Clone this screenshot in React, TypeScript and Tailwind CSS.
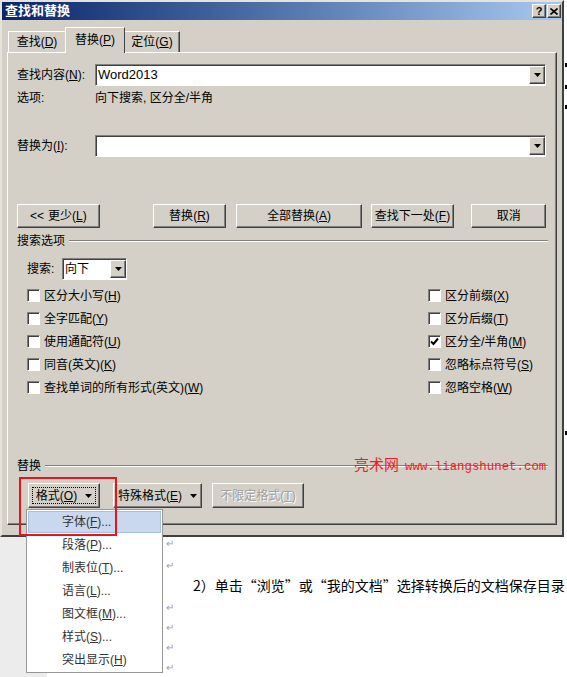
import React from "react";

const raised =
  "border border-t-white border-l-white border-r-[#404040] border-b-[#404040] shadow-[inset_-1px_-1px_0_#808080] bg-[#d4d0c8]";
const sunken =
  "border border-t-[#808080] border-l-[#808080] border-r-white border-b-white shadow-[inset_1px_1px_0_#404040] bg-white";

const Acc = ({ text, k, tail = "" }: { text: string; k: string; tail?: string }) => (
  <span className="whitespace-nowrap">
    {text}(<span className="underline underline-offset-[1px]">{k}</span>){tail}
  </span>
);

const Arrow = () => (
  <svg width="7" height="4" viewBox="0 0 7 4">
    <path d="M0 0h7L3.5 4z" fill="#000" />
  </svg>
);

const Combo = ({ value = "", className = "" }: { value?: string; className?: string }) => (
  <div className={`${sunken} flex items-center h-[22px] ${className}`}>
    <span className="flex-1 pl-[2px] text-[13px]">{value}</span>
    <div className={`${raised} w-[16px] h-[18px] flex items-center justify-center`}>
      <Arrow />
    </div>
  </div>
);

const Check = ({ label, checked = false }: { label: React.ReactNode; checked?: boolean }) => (
  <div className="flex items-center h-[23px]">
    <div className={`${sunken} w-[13px] h-[13px] flex items-center justify-center`}>
      {checked && (
        <svg width="9" height="9" viewBox="0 0 9 9">
          <path d="M1 4.5 L3.5 7 L8 1.5" stroke="#000" strokeWidth="2" fill="none" />
        </svg>
      )}
    </div>
    <span className="ml-[4px]">{label}</span>
  </div>
);

const Btn = ({ className = "", children }: { className?: string; children: React.ReactNode }) => (
  <div className={`${raised} flex items-center justify-center ${className}`}>{children}</div>
);

const GroupLine = ({ title }: { title: string }) => (
  <div className="flex items-center h-[16px]">
    <span>{title}</span>
    <div className="flex-1 ml-[4px] -mr-[2px] border-t border-t-[#808080] border-b border-b-white" />
  </div>
);

const menuItems: [string, string][] = [
  ["段落", "P"],
  ["制表位", "T"],
  ["语言", "L"],
  ["图文框", "M"],
  ["样式", "S"],
];

const App = () => {
  return (
    <div className="relative w-[567px] h-[677px] overflow-hidden bg-white text-[12px] leading-[16px] text-black font-['Liberation_Sans','Noto_Sans_CJK_SC',sans-serif]">
      <div className="flex">
        {/* dialog */}
        <div className="w-[564px] h-[537px] bg-[#d4d0c8] border-2 border-t-[#e6e3dc] border-l-[#e6e3dc] border-r-[#404040] border-b-[#404040] flex flex-col">
          <div className="h-[18px] flex items-center bg-linear-to-r from-[#0a246a] to-[#a9c9f0] pl-[3px] pr-[1px]">
            <span className="flex-1 text-white font-bold text-[13px]">查找和替换</span>
            <Btn className="w-[14px] h-[14px] text-[11px] font-bold">?</Btn>
            <Btn className="w-[14px] h-[14px] ml-px">
              <svg width="8" height="7" viewBox="0 0 8 7">
                <path d="M0.5 0.5 L7.5 6.5 M7.5 0.5 L0.5 6.5" stroke="#000" strokeWidth="1.6" />
              </svg>
            </Btn>
          </div>

          {/* tabs */}
          <div className="mt-[7px] h-[25px] flex items-end pl-[6px]">
            <div className="h-[21px] w-[57px] flex items-center justify-center border-t border-l border-t-white border-l-white">
              <Acc text="查找" k="D" />
            </div>
            <div className="relative z-10 -mb-px h-[26px] w-[60px] flex items-center justify-center bg-[#d4d0c8] border-t border-l border-r border-t-white border-l-white border-r-[#404040] pb-[2px]">
              <Acc text="替换" k="P" />
            </div>
            <div className="h-[21px] w-[55px] flex items-center justify-center border-t border-r border-t-white border-r-[#404040] shadow-[inset_-1px_0_0_#808080]">
              <Acc text="定位" k="G" />
            </div>
          </div>

          {/* panel */}
          <div className="ml-[5px] w-[550px] h-[473px] border border-t-white border-l-white border-r-[#404040] border-b-[#404040] shadow-[inset_-1px_-1px_0_#808080] pl-[9px] pr-[10px] flex flex-col">
            <div className="mt-[11px] flex items-center">
              <span className="w-[78px]">
                <Acc text="查找内容" k="N" tail=":" />
              </span>
              <Combo value="Word2013" className="flex-1" />
            </div>
            <div className="mt-[4px] h-[16px] flex items-center">
              <span className="w-[78px]">选项:</span>
              <span>向下搜索, 区分全/半角</span>
            </div>
            <div className="mt-[29px] flex items-center">
              <span className="w-[78px]">
                <Acc text="替换为" k="I" tail=":" />
              </span>
              <Combo className="flex-1" />
            </div>

            <div className="mt-[47px] h-[24px] flex">
              <Btn className="w-[83px]">
                <span className="mr-[4px]">{"<<"}</span>
                <Acc text="更少" k="L" />
              </Btn>
              <Btn className="w-[74px] ml-[53px]">
                <Acc text="替换" k="R" />
              </Btn>
              <Btn className="w-[126px] ml-[10px]">
                <Acc text="全部替换" k="A" />
              </Btn>
              <Btn className="w-[84px] ml-[9px]">
                <Acc text="查找下一处" k="F" />
              </Btn>
              <Btn className="w-[75px] ml-[17px]">取消</Btn>
            </div>

            <div className="mt-[5px]">
              <GroupLine title="搜索选项" />
            </div>

            <div className="mt-[9px] ml-[10px] flex items-center h-[22px]">
              <span className="w-[35px]">搜索:</span>
              <div className={`${sunken} w-[65px] h-[22px] flex items-center`}>
                <span className="flex-1 pl-[2px]">向下</span>
                <div className={`${raised} w-[16px] h-[18px] flex items-center justify-center`}>
                  <Arrow />
                </div>
              </div>
            </div>

            <div className="mt-[4px] ml-[10px] grid grid-cols-[401px_1fr]">
              <Check label={<Acc text="区分大小写" k="H" />} />
              <Check label={<Acc text="区分前缀" k="X" />} />
              <Check label={<Acc text="全字匹配" k="Y" />} />
              <Check label={<Acc text="区分后缀" k="T" />} />
              <Check label={<Acc text="使用通配符" k="U" />} />
              <Check label={<Acc text="区分全/半角" k="M" />} checked />
              <Check label={<Acc text="同音(英文)" k="K" />} />
              <Check label={<Acc text="忽略标点符号" k="S" />} />
              <Check label={<Acc text="查找单词的所有形式(英文)" k="W" />} />
              <Check label={<Acc text="忽略空格" k="W" />} />
            </div>

            <div className="relative mt-[59px]">
              <GroupLine title="替换" />
              {/* site watermark painted over the group line */}
              <span className="absolute left-[337px] top-[-2px] whitespace-nowrap text-[#ee1c24]">
                <span className="text-[15px] font-['Noto_Sans_CJK_SC',sans-serif]">亮术网</span>
                <span className="ml-[6px] text-[12.4px] font-['Liberation_Mono',monospace]">www.liangshunet.com</span>
              </span>
            </div>

            <div className="mt-[9px] h-[25px] flex">
              <Btn className="w-[72px] ml-[11px] p-[3px]">
                <div className="w-full h-full border border-dotted border-black flex items-center justify-center gap-[8px]">
                  <Acc text="格式" k="O" />
                  <Arrow />
                </div>
              </Btn>
              <Btn className="w-[89px] ml-[13px] gap-[8px]">
                <Acc text="特殊格式" k="E" />
                <Arrow />
              </Btn>
              <Btn className="w-[92px] ml-[10px] text-[#a0a0a0] [text-shadow:1px_1px_0_#fff]">
                <Acc text="不限定格式" k="T" />
              </Btn>
            </div>
          </div>
        </div>

        {/* strip of the window behind */}
        <div className="w-[3px] flex flex-col items-end">
          <div className="mt-[63px] w-[2px] h-[4px] bg-black" />
          <div className="mt-[18px] w-[2px] h-[4px] bg-black" />
          <div className="mt-[16px] w-[2px] h-[4px] bg-black" />
          <div className="mt-[322px] w-[2px] h-[4px] bg-black" />
        </div>
      </div>

      {/* document area under the dialog */}
      <div className="flex h-[140px]">
        <div className="w-[47px] bg-[#ececec]" />
        <div className="flex-1 pl-[117px] flex flex-col text-[#a0a0a0] text-[10px] leading-[12px]">
          <span className="mt-[1px] h-[12px] pl-[2px]">↵</span>
          <span className="mt-[10px] h-[12px] pl-[2px]">↵</span>
          <span className="mt-[3px] h-[20px] pl-[29px] text-[14px] leading-[20px] text-black font-['Noto_Sans_CJK_SC',sans-serif] whitespace-nowrap">
            2）单击“浏览”或“我的文档”选择转换后的文档保存目录
          </span>
          <span className="mt-[7px] h-[12px] pl-[2px]">↵</span>
          <span className="mt-[8px] h-[12px] pl-[2px]">↵</span>
          <span className="mt-[8px] h-[12px] pl-[2px]">↵</span>
          <span className="mt-[8px] h-[12px] pl-[2px]">↵</span>
        </div>
      </div>

      {/* open dropdown menu */}
      <div className="absolute left-[26px] top-[509px] w-[137px] h-[164px] bg-white border border-[#979797] py-px px-px text-[#333]">
        <div className="h-[22px] flex items-center pl-[33px] bg-[#c9d8ef] border border-[#a9bfdf]">
          <Acc text="字体" k="F" tail="..." />
        </div>
        {menuItems.map(([t, k]) => (
          <div key={t} className="h-[23px] flex items-center pl-[34px]">
            <Acc text={t} k={k} tail="..." />
          </div>
        ))}
        <div className="h-[23px] flex items-center pl-[34px]">
          <Acc text="突出显示" k="H" />
        </div>
      </div>

      {/* red highlight */}
      <div className="absolute left-[19px] top-[477px] w-[98px] h-[59px] border-2 border-[#e8141c]" />
    </div>
  );
};

export default App;
